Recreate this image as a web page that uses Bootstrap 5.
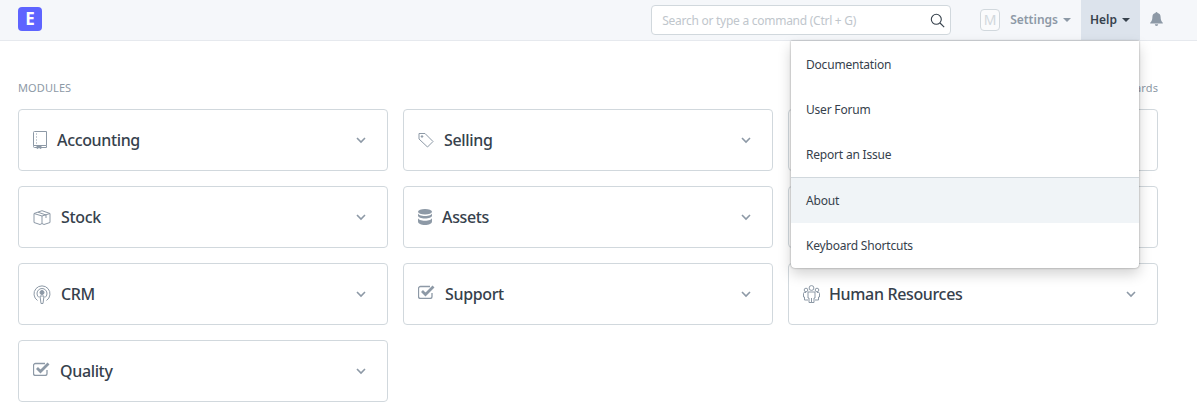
<!DOCTYPE html>
<html lang="en">
<head>
    <meta charset="UTF-8">
    <title>Desk</title>
    <meta name="viewport" content="width=device-width, initial-scale=1">
    <link href="https://cdn.jsdelivr.net/npm/bootstrap@5.3.3/dist/css/bootstrap.min.css" rel="stylesheet">
    <style>
        body {
          background: #fff;
          color: #36414c;
          font-family: "Noto Sans", "Open Sans", sans-serif;
          font-size: 12px;
          overflow: hidden;
        }

        .top-bar {
          height: 41px;
          padding: 0 0 0 18px;
          background: #f5f7fa;
          border-bottom: 1px solid #e6e9ee;
        }

        .brand-box {
          width: 24px;
          height: 24px;
          margin-top: -2px;
          border-radius: 4px;
          background: #5e64ff;
          color: #fff;
          font: 700 17px/24px "Noto Sans", sans-serif;
          text-align: center;
        }

        .search-box {
          width: 300px;
          height: 30px;
          padding: 0 5px 0 10px;
          background: #fff;
          border: 1px solid #d1d8dd;
          border-radius: 4px;
          color: #c0c6cc;
          font-size: 12px;
          letter-spacing: -.26px;
        }

        .search-box span {
          padding-top: 1px;
        }

        .avatar-box {
          width: 20px;
          height: 22px;
          margin: 0 0 0 29px;
          background: #fafbfc;
          border: 1px solid #d1d8dd;
          border-radius: 4px;
          color: #d1d8dd;
          font-size: 14px;
          line-height: 20px;
          text-align: center;
        }

        .bar-link {
          height: 40px;
          padding: 0 10px;
          color: #8d99a6;
          font-size: 12px;
          font-weight: 600;
          line-height: 39px;
        }

        .bar-link.is-open {
          padding: 0 10px 0 9px;
          background: #dce3ec;
          color: #36414c;
        }

        .bar-caret {
          display: inline-block;
          margin-left: 5px;
          vertical-align: 2px;
          border-top: 4px solid currentColor;
          border-left: 4px solid transparent;
          border-right: 4px solid transparent;
        }

        .bell-wrap {
          width: 57px;
          padding: 0 0 3px 10px;
        }

        .help-menu.dropdown-menu {
          position: absolute;
          top: 41px;
          left: 791px;
          width: 348px;
          margin: 0;
          padding: 1px 0 0;
          border: 0;
          border-radius: 0 0 4px 4px;
          box-shadow: 0 0 2px rgba(0, 0, 0, .45), 0 6px 14px rgba(0, 0, 0, .18);
          z-index: 10;
        }

        .help-menu .dropdown-item {
          height: 45px;
          padding: 0 15px;
          color: #36414c;
          font-size: 12px;
          letter-spacing: -.2px;
          line-height: 46px;
        }

        .help-menu .dropdown-item.is-hover {
          background: #f0f4f7;
        }

        .help-menu .dropdown-divider {
          margin: 0;
          border-color: #d1d8dd;
          opacity: 1;
        }

        .page-body {
          padding: 40px 39px 0 18px;
        }

        .section-head {
          height: 14px;
          margin-bottom: 14px;
          color: #8d99a6;
          font-size: 11px;
          letter-spacing: .1px;
          line-height: 14px;
        }

        .module-grid {
          display: grid;
          grid-template-columns: repeat(3, 370px);
          gap: 15px;
        }

        .module-card.card {
          height: 62px;
          padding: 0 21px 0 14px;
          border: 1px solid #d1d8dd;
          border-radius: 4px;
          gap: 10px;
        }

        .module-icon {
          flex: none;
          color: #8d99a6;
        }

        .module-icon.is-people {
          margin-right: -1px;
        }

        .module-name {
          color: #36414c;
          font-size: 16px;
          font-weight: 500;
          letter-spacing: -.35px;
        }

        .module-chevron {
          margin-left: auto;
          color: #8d99a6;
        }
    </style>
</head>
<body>

<nav class="navbar top-bar d-flex flex-nowrap align-items-center justify-content-start">
    <div class="brand-box">E</div>
    <div class="search-box d-flex align-items-center justify-content-between ms-auto">
        <span>Search or type a command (Ctrl + G)</span>
        <svg width="15" height="15" viewBox="0 0 15 15" fill="none" stroke="#36414c" stroke-width="1.1"><circle cx="6.3" cy="6.3" r="5"/><path d="M10 10l4.2 4.2"/></svg>
    </div>
    <div class="avatar-box">M</div>
    <div class="bar-link">Settings<span class="bar-caret"></span></div>
    <div class="bar-link is-open">Help<span class="bar-caret"></span></div>
    <div class="bell-wrap">
        <svg width="13" height="14" viewBox="0 0 13 14" fill="#8d99a6"><path d="M6.5 0a1 1 0 0 1 1 1.1C9.6 1.5 10.6 3 10.6 5c0 3.200.9 4.500 2.200 5.700v.8H.2v-.8C1.500 9.500 2.400 8.200 2.400 5c0-2 1-3.500 3.100-3.900a1 1 0 0 1 1-1.100zM4.800 12.300h3.400a1.700 1.700 0 0 1-3.400 0z"/></svg>
    </div>
</nav>

<div class="dropdown-menu show help-menu">
    <a class="dropdown-item" href="#">Documentation</a>
    <a class="dropdown-item" href="#">User Forum</a>
    <a class="dropdown-item" href="#">Report an Issue</a>
    <div class="dropdown-divider"></div>
    <a class="dropdown-item is-hover" href="#">About</a>
    <a class="dropdown-item" href="#">Keyboard Shortcuts</a>
</div>

<div class="page-body">
    <div class="section-head d-flex justify-content-between">
        <span>MODULES</span>
        <span>Customize Dashboards</span>
    </div>

    <div class="module-grid">
        <div class="card module-card flex-row align-items-center">
            <svg class="module-icon" width="14" height="18" viewBox="0 0 14 18" fill="none" stroke="currentColor"><path d="M.5 14.500V1.500a1 1 0 0 1 1-1h12v14z"/><path d="M.5 14.500v1a1 1 0 0 0 1 1h12v-2"/><path d="M3.500 2.500v10" stroke-dasharray="1 2"/><path d="M4 14.500h4v3l-2-1-2 1z" fill="currentColor"/></svg>
            <span class="module-name">Accounting</span>
            <svg class="module-chevron" width="10" height="7" viewBox="0 0 10 7" fill="none" stroke="currentColor" stroke-width="1.600"><path d="M1 1l4 4 4-4"/></svg>
        </div>
        <div class="card module-card flex-row align-items-center">
            <svg class="module-icon" width="16" height="16" viewBox="0 0 16 16" fill="none" stroke="currentColor"><path d="M1 1.500h6l8 8-5.500 5.500-8.500-8z" stroke-linejoin="round"/><circle cx="4" cy="4.500" r=".8" fill="currentColor"/></svg>
            <span class="module-name">Selling</span>
            <svg class="module-chevron" width="10" height="7" viewBox="0 0 10 7" fill="none" stroke="currentColor" stroke-width="1.600"><path d="M1 1l4 4 4-4"/></svg>
        </div>
        <div class="card module-card flex-row align-items-center"></div>

        <div class="card module-card flex-row align-items-center">
            <svg class="module-icon" width="18" height="15" viewBox="0 0 18 15" fill="none" stroke="currentColor"><path d="M1 3.500l8-2.800 8 2.800v9l-6 2-2-1-2 1-6-2z" stroke-linejoin="round"/><path d="M1 3.500l8 2.500 8-2.500M9 6v7.500M5 2.200l8 2.800v3"/></svg>
            <span class="module-name">Stock</span>
            <svg class="module-chevron" width="10" height="7" viewBox="0 0 10 7" fill="none" stroke="currentColor" stroke-width="1.600"><path d="M1 1l4 4 4-4"/></svg>
        </div>
        <div class="card module-card flex-row align-items-center">
            <svg class="module-icon" width="14" height="16" viewBox="0 0 14 16" fill="currentColor"><ellipse cx="7" cy="2.800" rx="7" ry="2.800"/><path d="M0 4.300v2.500c0 1.500 3.100 2.700 7 2.700s7-1.200 7-2.700V4.300C14 5.800 10.900 7 7 7S0 5.800 0 4.300z"/><path d="M0 9v3.200C0 14.700 3.100 16 7 16s7-1.300 7-3.800V9c0 1.500-3.100 2.700-7 2.700S0 10.500 0 9z"/></svg>
            <span class="module-name">Assets</span>
            <svg class="module-chevron" width="10" height="7" viewBox="0 0 10 7" fill="none" stroke="currentColor" stroke-width="1.600"><path d="M1 1l4 4 4-4"/></svg>
        </div>
        <div class="card module-card flex-row align-items-center"></div>

        <div class="card module-card flex-row align-items-center">
            <svg class="module-icon" width="18" height="19" viewBox="0 0 18 19" fill="none" stroke="currentColor"><path d="M4.500 15.500a8 8 0 1 1 9 0"/><path d="M6 12.500a5 5 0 1 1 6 0"/><circle cx="9" cy="7.500" r="2" fill="currentColor"/><path d="M7 11h4l-1 7.500H8z" fill="#fff"/></svg>
            <span class="module-name">CRM</span>
            <svg class="module-chevron" width="10" height="7" viewBox="0 0 10 7" fill="none" stroke="currentColor" stroke-width="1.600"><path d="M1 1l4 4 4-4"/></svg>
        </div>
        <div class="card module-card flex-row align-items-center">
            <svg class="module-icon mb-1" width="17" height="14" viewBox="0 0 17 14" fill="none" stroke="currentColor" stroke-width="1.300"><path d="M14 8v3.500a2 2 0 0 1-2 2H2.500a2 2 0 0 1-2-2v-8a2 2 0 0 1 2-2H12"/><path d="M4 6l3.500 3.500L15.500 1.500" stroke-width="2.800"/></svg>
            <span class="module-name">Support</span>
            <svg class="module-chevron" width="10" height="7" viewBox="0 0 10 7" fill="none" stroke="currentColor" stroke-width="1.600"><path d="M1 1l4 4 4-4"/></svg>
        </div>
        <div class="card module-card flex-row align-items-center">
            <svg class="module-icon is-people" width="17" height="18" viewBox="0 0 17 18" fill="none" stroke="currentColor"><circle cx="8.500" cy="3" r="2.400"/><circle cx="3" cy="5" r="1.800"/><circle cx="14" cy="5" r="1.800"/><path d="M5 7h7v6h-1v4.500H6V13H5z"/><path d="M3 7.500H1.500a1 1 0 0 0-1 1V12h1v3H5M14 7.500h1.500a1 1 0 0 1 1 1V12h-1v3H12M8.500 13v4.500"/></svg>
            <span class="module-name">Human Resources</span>
            <svg class="module-chevron" width="10" height="7" viewBox="0 0 10 7" fill="none" stroke="currentColor" stroke-width="1.600"><path d="M1 1l4 4 4-4"/></svg>
        </div>

        <div class="card module-card flex-row align-items-center">
            <svg class="module-icon mb-1" width="17" height="14" viewBox="0 0 17 14" fill="none" stroke="currentColor" stroke-width="1.300"><path d="M14 8v3.500a2 2 0 0 1-2 2H2.500a2 2 0 0 1-2-2v-8a2 2 0 0 1 2-2H12"/><path d="M4 6l3.500 3.500L15.500 1.500" stroke-width="2.800"/></svg>
            <span class="module-name">Quality</span>
            <svg class="module-chevron" width="10" height="7" viewBox="0 0 10 7" fill="none" stroke="currentColor" stroke-width="1.600"><path d="M1 1l4 4 4-4"/></svg>
        </div>
    </div>
</div>

<script src="https://cdn.jsdelivr.net/npm/bootstrap@5.3.3/dist/js/bootstrap.bundle.min.js"></script>
</body>
</html>
